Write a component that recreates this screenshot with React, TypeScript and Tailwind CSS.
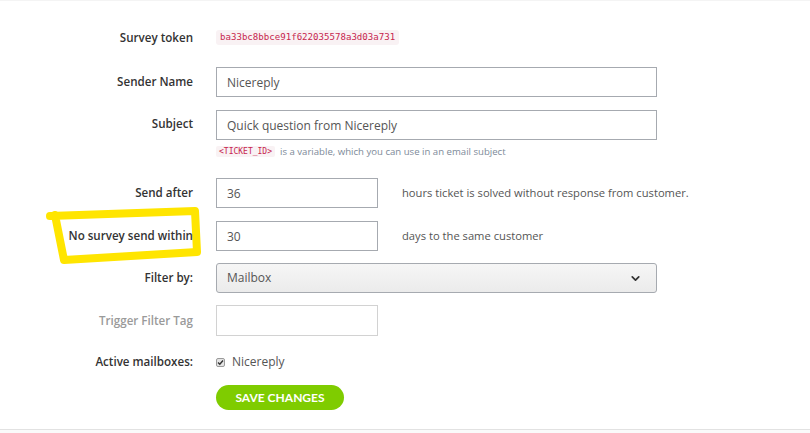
import { ChevronDown } from "lucide-react";

const label = "w-[193px] shrink-0 text-right text-[11.6px] font-semibold text-[#333]";
const input =
  "h-[30px] border border-[#a6aab0] bg-white px-[10px] text-[12px] text-[#555] outline-none";

const Highlight = () => (
  <svg className="absolute left-0 top-0 pointer-events-none" width="810" height="433" viewBox="0 0 810 433">
    <path
      d="M50 215 L195 210 L197 251 L64 259 L55 214"
      fill="none"
      stroke="#ffe500"
      strokeWidth="8"
      strokeLinecap="round"
      strokeLinejoin="round"
    />
  </svg>
);

export default function App() {
  return (
    <div className="relative h-[433px] w-[810px] bg-[#fafafa] font-['Open_Sans',sans-serif]">
      <div className="relative h-[430px] border-y border-t-[#f4f4f4] border-b-[#e2e2e2] bg-white">
        <Highlight />
        <div className="relative flex flex-col">
          <div className="mt-[29px] flex h-[15px] items-center gap-[23px]">
            <div className={label}>Survey token</div>
            <code className="rounded-[3px] bg-[#f9f2f4] px-[4px] font-['DejaVu_Sans_Mono',monospace] text-[9.1px] leading-[15px] text-[#c7254e]">
              ba33bc8bbce91f622035578a3d03a731
            </code>
          </div>

          <div className="mt-[22px] flex items-center gap-[23px]">
            <div className={label}>Sender Name</div>
            <input className={`${input} w-[441px]`} defaultValue="Nicereply" />
          </div>

          <div className="mt-[13px] flex items-start gap-[23px]">
            <div className={`${label} pt-[5px]`}>Subject</div>
            <div className="flex flex-col">
              <input className={`${input} w-[441px]`} defaultValue="Quick question from Nicereply" />
              <div className="mt-[6px] flex h-[11px] items-center gap-[5px] text-[9.6px] leading-[11px] text-[#7d8a99]">
                <code className="rounded-[2px] bg-[#f9f2f4] px-[3px] font-['DejaVu_Sans_Mono',monospace] text-[8px] leading-[11px] text-[#c7254e]">
                  {"<TICKET_ID>"}
                </code>
                <span>is a variable, which you can use in an email subject</span>
              </div>
            </div>
          </div>

          <div className="mt-[21px] flex items-center gap-[23px]">
            <div className={label}>Send after</div>
            <input className={`${input} w-[162px]`} defaultValue="36" />
            <span className="ml-[1px] text-[11.2px] text-[#555]">hours ticket is solved without response from customer.</span>
          </div>

          <div className="mt-[13px] flex items-center gap-[23px]">
            <div className={label}>No survey send within</div>
            <input className={`${input} w-[162px]`} defaultValue="30" />
            <span className="ml-[1px] text-[11.2px] text-[#555]">days to the same customer</span>
          </div>

          <div className="mt-[12px] flex items-center gap-[23px]">
            <div className={label}>Filter by:</div>
            <div className="flex h-[30px] w-[441px] items-center justify-between rounded-[3px] border border-[#a6aab0] bg-gradient-to-b from-[#f6f6f6] to-[#ebebeb] pl-[10px] pr-[14px] text-[12px] text-[#555]">
              <span>Mailbox</span>
              <ChevronDown size={13} strokeWidth={3.2} className="text-[#333]" />
            </div>
          </div>

          <div className="mt-[12px] flex items-center gap-[23px]">
            <div className="w-[193px] shrink-0 text-right text-[11.6px] font-semibold text-[#9a9a9a]">Trigger Filter Tag</div>
            <input className="h-[31px] w-[162px] border border-[#d2d2d2] bg-white px-[10px] text-[12px] outline-none" />
          </div>

          <div className="mt-[18px] flex h-[16px] items-center gap-[23px]">
            <div className={label}>Active mailboxes:</div>
            <div className="flex items-center gap-[7px]">
              <span className="flex h-[9px] w-[9px] items-center justify-center rounded-[2px] border border-[#9a9a9a] bg-[#e4e4e4]">
                <svg width="7" height="7" viewBox="0 0 7 7">
                  <path d="M1 3.6 L2.8 5.3 L6 1.5" fill="none" stroke="#333" strokeWidth="1.4" />
                </svg>
              </span>
              <span className="text-[12px] text-[#555]">Nicereply</span>
            </div>
          </div>

          <div className="mt-[15px] flex gap-[23px]">
            <div className="w-[193px] shrink-0" />
            <button className="h-[25px] w-[128px] rounded-full bg-[#7fcc00] font-['Lato',sans-serif] text-[12px] font-bold text-white">
              SAVE CHANGES
            </button>
          </div>
        </div>
      </div>
    </div>
  );
}
